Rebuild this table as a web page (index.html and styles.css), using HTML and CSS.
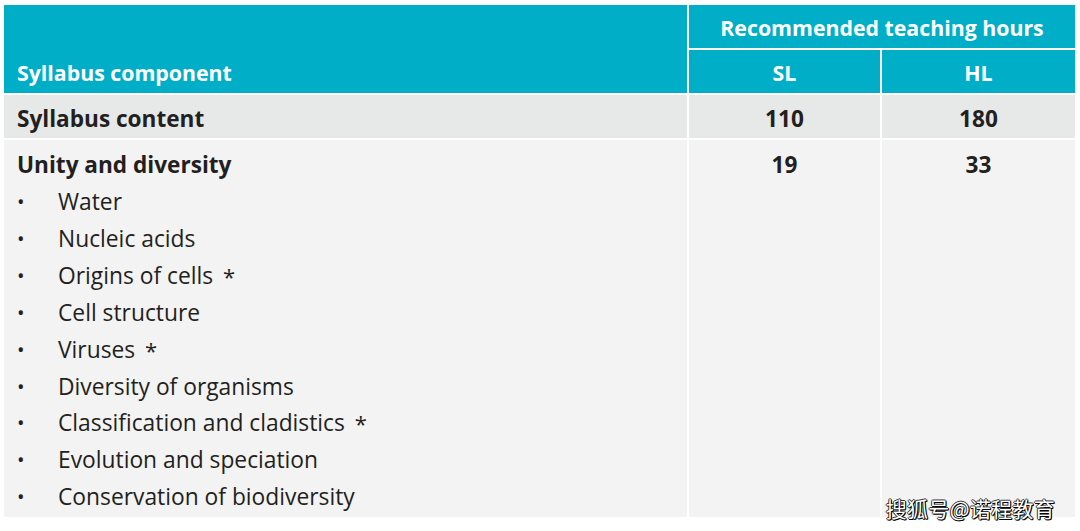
FILE: index.html
```html
<!DOCTYPE html>
<html lang="en">
<head>
<meta charset="utf-8">
<title>Syllabus</title>
<link rel="stylesheet" href="styles.css">
</head>
<body>
<div class="page">
  <div class="table">
    <div class="cell head head-comp">Syllabus component</div>
    <div class="cell head head-rec">Recommended teaching hours</div>
    <div class="cell head center">SL</div>
    <div class="cell head center">HL</div>

    <div class="cell total label">Syllabus content</div>
    <div class="cell total center">110</div>
    <div class="cell total center">180</div>

    <div class="cell body label">
      <div class="topic">Unity and diversity</div>
      <ul class="items">
        <li><span class="dot">•</span>Water</li>
        <li><span class="dot">•</span>Nucleic acids</li>
        <li><span class="dot">•</span>Origins of cells <span class="star">*</span></li>
        <li><span class="dot">•</span>Cell structure</li>
        <li><span class="dot">•</span>Viruses <span class="star">*</span></li>
        <li><span class="dot">•</span>Diversity of organisms</li>
        <li><span class="dot">•</span>Classification and cladistics <span class="star">*</span></li>
        <li><span class="dot">•</span>Evolution and speciation</li>
        <li><span class="dot">•</span>Conservation of biodiversity</li>
      </ul>
    </div>
    <div class="cell body center"><div class="topic">19</div></div>
    <div class="cell body center"><div class="topic">33</div></div>
  </div>
  <div class="watermark">搜狐号@诺程教育</div>
</div>
</body>
</html>
```

FILE: styles.css
```css
html, body {
  margin: 0;
  padding: 0;
  background: #ffffff;
}

.page {
  position: relative;
  width: 1080px;
  height: 531px;
  padding: 5px 0 0 4px;
  box-sizing: border-box;
  font-family: "Open Sans", "Liberation Sans", sans-serif;
  color: #231f20;
}

.table {
  display: grid;
  grid-template-columns: 683px 191px 193px;
  grid-template-rows: 43px 43px 43px 377px;
  gap: 2px;
}

.cell {
  box-sizing: border-box;
}

.center {
  text-align: center;
}

.head {
  background: #00aec7;
  color: #ffffff;
  font-weight: 700;
  font-size: 21.3px;
  padding-top: 2px;
  display: flex;
  align-items: center;
  justify-content: center;
}

.head-comp {
  grid-row: 1 / span 2;
  justify-content: flex-start;
  align-items: flex-end;
  padding: 0 0 6px 13px;
}

.head-rec {
  grid-column: 2 / span 2;
}

.total {
  background: #e7e8e8;
  font-weight: 700;
  font-size: 22.6px;
  padding-top: 3px;
  display: flex;
  align-items: center;
  justify-content: center;
}

.total.label {
  justify-content: flex-start;
  padding-left: 13px;
}

.body {
  background: #f3f3f3;
  padding-top: 6px;
}

.body.label {
  padding-left: 13px;
}

.topic {
  font-weight: 700;
  font-size: 22.6px;
  line-height: 37px;
}

.items {
  list-style: none;
  margin: 0;
  padding: 1px 0 0;
}

.items li {
  font-size: 22.8px;
  line-height: 36.9px;
  display: flex;
  white-space: pre;
}

.dot {
  width: 41px;
  flex: none;
  padding-left: 0;
  font-size: 20px;
}

.star {
  margin-left: 4px;
  font-size: 22px;
}

.watermark {
  position: absolute;
  right: 25px;
  bottom: 11px;
  font-family: "Noto Sans CJK SC", sans-serif;
  font-size: 21px;
  line-height: 24px;
  color: #ffffff;
  letter-spacing: 0.3px;
  text-shadow: 1px 1px 0 #000, -1px 0 0 #333, 0 -1px 0 #333, 1px 0 0 #000, 0 1px 0 #000;
}
```
